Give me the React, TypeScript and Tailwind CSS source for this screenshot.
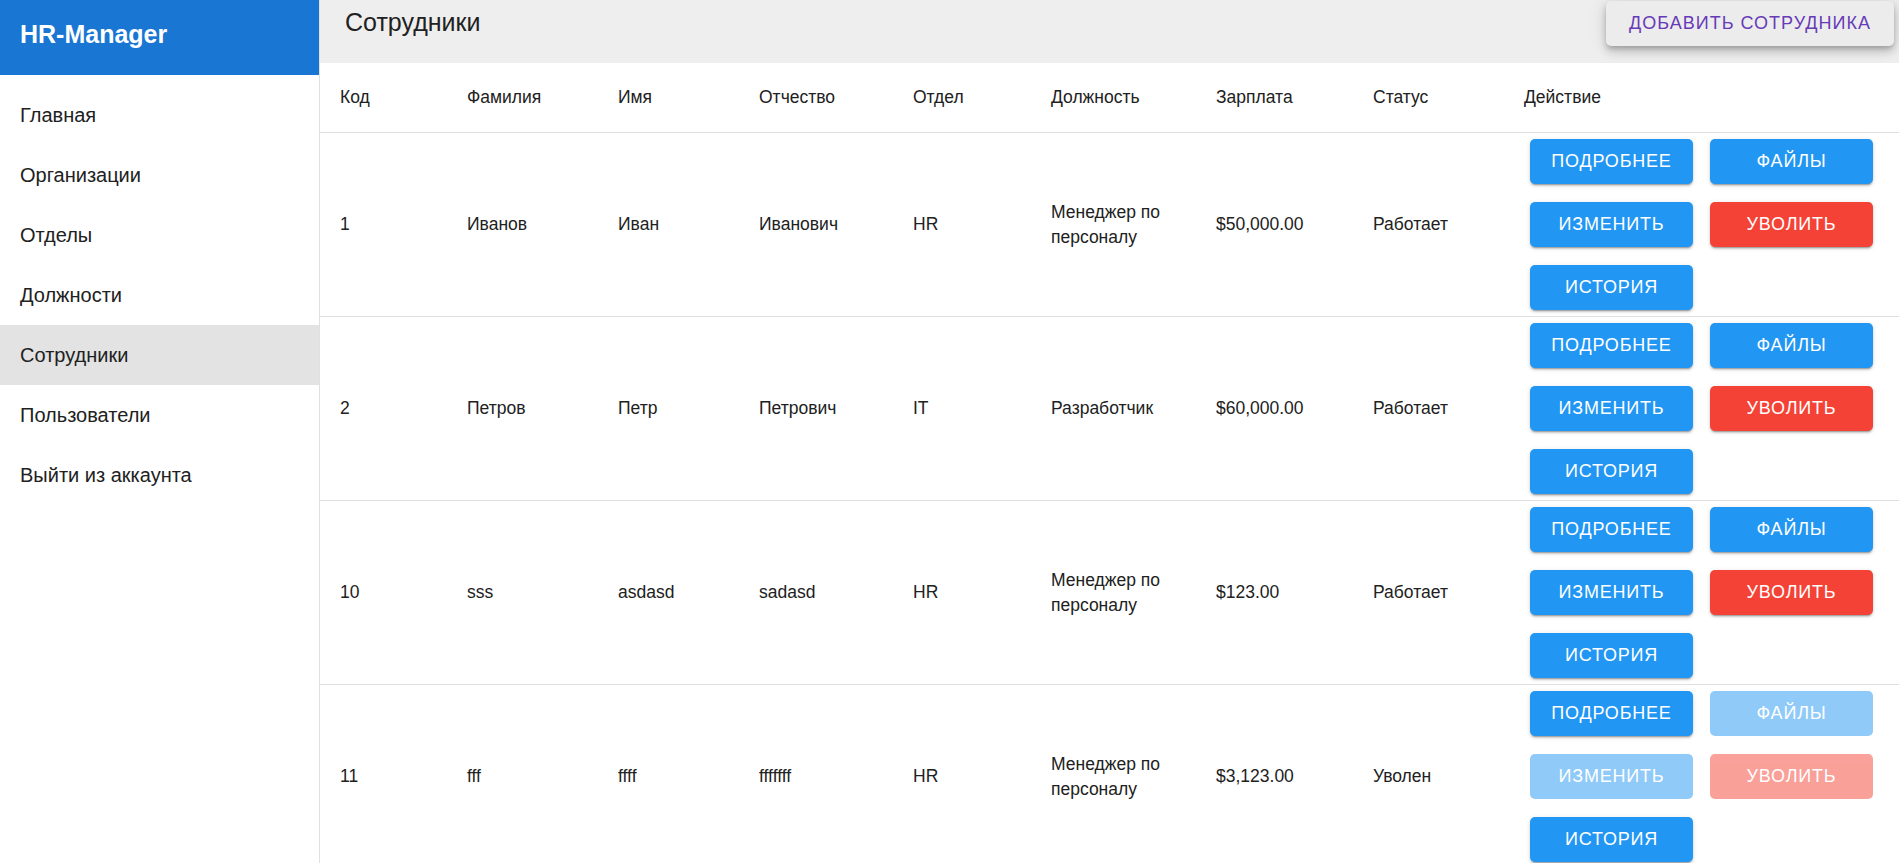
import React from "react";

type Row = {
  id: string;
  last: string;
  first: string;
  middle: string;
  dept: string;
  pos: string;
  salary: string;
  status: string;
  fired: boolean;
};

const rows: Row[] = [
  { id: "1", last: "Иванов", first: "Иван", middle: "Иванович", dept: "HR", pos: "Менеджер по персоналу", salary: "$50,000.00", status: "Работает", fired: false },
  { id: "2", last: "Петров", first: "Петр", middle: "Петрович", dept: "IT", pos: "Разработчик", salary: "$60,000.00", status: "Работает", fired: false },
  { id: "10", last: "sss", first: "asdasd", middle: "sadasd", dept: "HR", pos: "Менеджер по персоналу", salary: "$123.00", status: "Работает", fired: false },
  { id: "11", last: "fff", first: "ffff", middle: "fffffff", dept: "HR", pos: "Менеджер по персоналу", salary: "$3,123.00", status: "Уволен", fired: true },
];

const menu = ["Главная", "Организации", "Отделы", "Должности", "Сотрудники", "Пользователи", "Выйти из аккаунта"];

const cols = "grid grid-cols-[127px_151px_141px_154px_138px_165px_157px_151px_1fr]";

function Btn({ label, color, disabled }: { label: string; color: "blue" | "red"; disabled?: boolean }) {
  const bg = color === "blue" ? "bg-[#2196f3]" : "bg-[#f44336]";
  return (
    <div
      className={
        "h-[45px] w-[163px] rounded-[5px] flex items-center justify-center text-white uppercase text-[18px] tracking-[0.8px] " +
        bg +
        (disabled ? " opacity-50" : " shadow-[0_3px_1px_-2px_rgba(0,0,0,0.2),0_2px_2px_0_rgba(0,0,0,0.14),0_1px_5px_0_rgba(0,0,0,0.12)]")
      }
    >
      {label}
    </div>
  );
}

export default function App() {
  return (
    <div className="min-h-screen flex bg-white text-[#212121] font-['Liberation_Sans',Arial,sans-serif]">
      <aside className="w-[320px] shrink-0 border-r border-[#e0e0e0] flex flex-col">
        <div className="h-[75px] bg-[#1976d2] px-[20px] pb-[6px] flex items-center">
          <span className="text-white font-bold text-[25px]">HR-Manager</span>
        </div>
        <nav className="pt-[10px] flex flex-col">
          {menu.map((m) => (
            <div
              key={m}
              className={"h-[60px] px-[20px] flex items-center text-[20px] " + (m === "Сотрудники" ? "bg-[#e3e3e3]" : "")}
            >
              {m}
            </div>
          ))}
        </nav>
      </aside>
      <main className="flex-1 flex flex-col min-w-0">
        <div className="h-[63px] bg-[#eeeeee] flex justify-between items-start">
          <div className="h-[46px] pl-[25px] flex items-center text-[25px]">Сотрудники</div>
          <div className="mt-[1px] mr-[5px] h-[45px] w-[288px] rounded-[5px] bg-[#ececec] flex items-center justify-center text-[#673ab7] uppercase text-[18px] tracking-[1px] shadow-[0_3px_5px_-1px_rgba(0,0,0,0.2),0_6px_10px_0_rgba(0,0,0,0.14),0_1px_18px_0_rgba(0,0,0,0.12)]">
            Добавить сотрудника
          </div>
        </div>
        <div className="text-[17.5px] leading-[25px]">
          <div className={cols + " h-[70px] items-center border-b border-[#e0e0e0]"}>
            {["Код", "Фамилия", "Имя", "Отчество", "Отдел", "Должность", "Зарплата", "Статус", "Действие"].map((h) => (
              <div key={h} className="px-[20px]">{h}</div>
            ))}
          </div>
          {rows.map((r) => (
            <div key={r.id} className={cols + " h-[184px] items-center border-b border-[#e0e0e0]"}>
              <div className="px-[20px]">{r.id}</div>
              <div className="px-[20px]">{r.last}</div>
              <div className="px-[20px]">{r.first}</div>
              <div className="px-[20px]">{r.middle}</div>
              <div className="px-[20px]">{r.dept}</div>
              <div className="px-[20px]">{r.pos}</div>
              <div className="px-[20px]">{r.salary}</div>
              <div className="px-[20px]">{r.status}</div>
              <div className="pl-[26px] grid grid-cols-[163px_163px] gap-x-[17px] gap-y-[18px]">
                <Btn label="Подробнее" color="blue" />
                <Btn label="Файлы" color="blue" disabled={r.fired} />
                <Btn label="Изменить" color="blue" disabled={r.fired} />
                <Btn label="Уволить" color="red" disabled={r.fired} />
                <Btn label="История" color="blue" />
              </div>
            </div>
          ))}
        </div>
      </main>
    </div>
  );
}
